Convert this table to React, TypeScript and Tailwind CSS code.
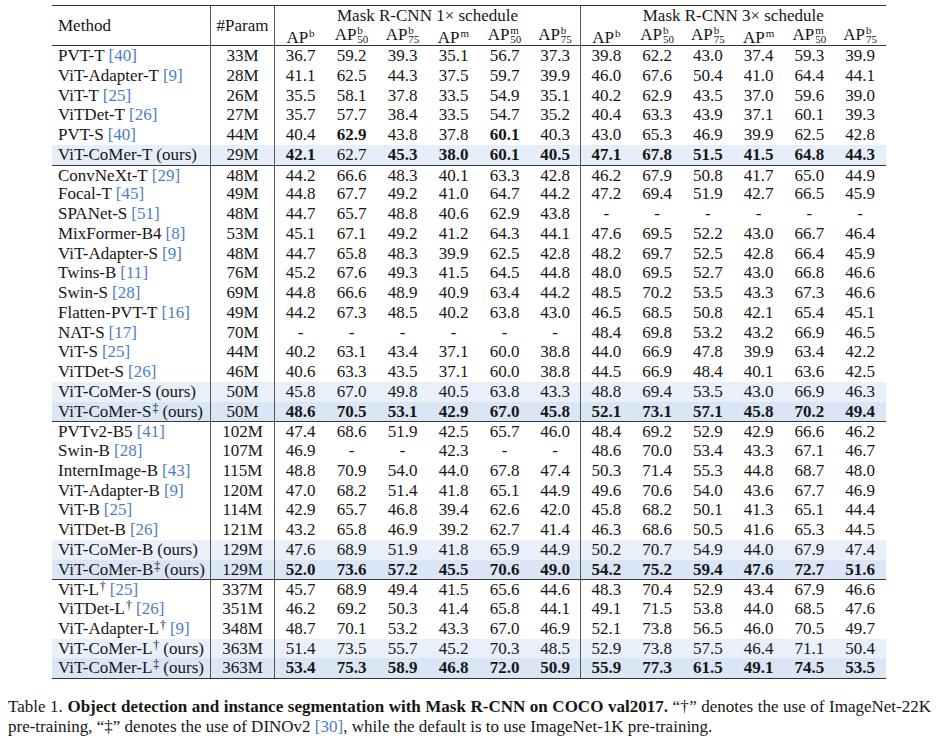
import React from "react";

type Cell = { v: string; b?: boolean };
type Row = {
  name: string;
  sup?: string;
  cite?: string;
  ours?: boolean;
  param: string;
  vals: string;
  bold?: string;
  bg?: "light" | "dark" | "tlight";
};

const GRID = "grid grid-cols-[159px_64px_repeat(6,51px)_repeat(6,50.75px)]";

const groups: Row[][] = [
  [
    { name: "PVT-T", cite: "40", param: "33M", vals: "36.7 59.2 39.3 35.1 56.7 37.3 39.8 62.2 43.0 37.4 59.3 39.9" },
    { name: "ViT-Adapter-T", cite: "9", param: "28M", vals: "41.1 62.5 44.3 37.5 59.7 39.9 46.0 67.6 50.4 41.0 64.4 44.1" },
    { name: "ViT-T", cite: "25", param: "26M", vals: "35.5 58.1 37.8 33.5 54.9 35.1 40.2 62.9 43.5 37.0 59.6 39.0" },
    { name: "ViTDet-T", cite: "26", param: "27M", vals: "35.7 57.7 38.4 33.5 54.7 35.2 40.4 63.3 43.9 37.1 60.1 39.3" },
    { name: "PVT-S", cite: "40", param: "44M", vals: "40.4 62.9 43.8 37.8 60.1 40.3 43.0 65.3 46.9 39.9 62.5 42.8", bold: "1,4" },
    { name: "ViT-CoMer-T", ours: true, param: "29M", vals: "42.1 62.7 45.3 38.0 60.1 40.5 47.1 67.8 51.5 41.5 64.8 44.3", bold: "0,2,3,4,5,6,7,8,9,10,11", bg: "tlight" },
  ],
  [
    { name: "ConvNeXt-T", cite: "29", param: "48M", vals: "44.2 66.6 48.3 40.1 63.3 42.8 46.2 67.9 50.8 41.7 65.0 44.9" },
    { name: "Focal-T", cite: "45", param: "49M", vals: "44.8 67.7 49.2 41.0 64.7 44.2 47.2 69.4 51.9 42.7 66.5 45.9" },
    { name: "SPANet-S", cite: "51", param: "48M", vals: "44.7 65.7 48.8 40.6 62.9 43.8 - - - - - -" },
    { name: "MixFormer-B4", cite: "8", param: "53M", vals: "45.1 67.1 49.2 41.2 64.3 44.1 47.6 69.5 52.2 43.0 66.7 46.4" },
    { name: "ViT-Adapter-S", cite: "9", param: "48M", vals: "44.7 65.8 48.3 39.9 62.5 42.8 48.2 69.7 52.5 42.8 66.4 45.9" },
    { name: "Twins-B", cite: "11", param: "76M", vals: "45.2 67.6 49.3 41.5 64.5 44.8 48.0 69.5 52.7 43.0 66.8 46.6" },
    { name: "Swin-S", cite: "28", param: "69M", vals: "44.8 66.6 48.9 40.9 63.4 44.2 48.5 70.2 53.5 43.3 67.3 46.6" },
    { name: "Flatten-PVT-T", cite: "16", param: "49M", vals: "44.2 67.3 48.5 40.2 63.8 43.0 46.5 68.5 50.8 42.1 65.4 45.1" },
    { name: "NAT-S", cite: "17", param: "70M", vals: "- - - - - - 48.4 69.8 53.2 43.2 66.9 46.5" },
    { name: "ViT-S", cite: "25", param: "44M", vals: "40.2 63.1 43.4 37.1 60.0 38.8 44.0 66.9 47.8 39.9 63.4 42.2" },
    { name: "ViTDet-S", cite: "26", param: "46M", vals: "40.6 63.3 43.5 37.1 60.0 38.8 44.5 66.9 48.4 40.1 63.6 42.5" },
    { name: "ViT-CoMer-S", ours: true, param: "50M", vals: "45.8 67.0 49.8 40.5 63.8 43.3 48.8 69.4 53.5 43.0 66.9 46.3", bg: "light" },
    { name: "ViT-CoMer-S", sup: "‡", ours: true, param: "50M", vals: "48.6 70.5 53.1 42.9 67.0 45.8 52.1 73.1 57.1 45.8 70.2 49.4", bold: "all", bg: "dark" },
  ],
  [
    { name: "PVTv2-B5", cite: "41", param: "102M", vals: "47.4 68.6 51.9 42.5 65.7 46.0 48.4 69.2 52.9 42.9 66.6 46.2" },
    { name: "Swin-B", cite: "28", param: "107M", vals: "46.9 - - 42.3 - - 48.6 70.0 53.4 43.3 67.1 46.7" },
    { name: "InternImage-B", cite: "43", param: "115M", vals: "48.8 70.9 54.0 44.0 67.8 47.4 50.3 71.4 55.3 44.8 68.7 48.0" },
    { name: "ViT-Adapter-B", cite: "9", param: "120M", vals: "47.0 68.2 51.4 41.8 65.1 44.9 49.6 70.6 54.0 43.6 67.7 46.9" },
    { name: "ViT-B", cite: "25", param: "114M", vals: "42.9 65.7 46.8 39.4 62.6 42.0 45.8 68.2 50.1 41.3 65.1 44.4" },
    { name: "ViTDet-B", cite: "26", param: "121M", vals: "43.2 65.8 46.9 39.2 62.7 41.4 46.3 68.6 50.5 41.6 65.3 44.5" },
    { name: "ViT-CoMer-B", ours: true, param: "129M", vals: "47.6 68.9 51.9 41.8 65.9 44.9 50.2 70.7 54.9 44.0 67.9 47.4", bg: "light" },
    { name: "ViT-CoMer-B", sup: "‡", ours: true, param: "129M", vals: "52.0 73.6 57.2 45.5 70.6 49.0 54.2 75.2 59.4 47.6 72.7 51.6", bold: "all", bg: "dark" },
  ],
  [
    { name: "ViT-L", sup: "†", cite: "25", param: "337M", vals: "45.7 68.9 49.4 41.5 65.6 44.6 48.3 70.4 52.9 43.4 67.9 46.6" },
    { name: "ViTDet-L", sup: "†", cite: "26", param: "351M", vals: "46.2 69.2 50.3 41.4 65.8 44.1 49.1 71.5 53.8 44.0 68.5 47.6" },
    { name: "ViT-Adapter-L", sup: "†", cite: "9", param: "348M", vals: "48.7 70.1 53.2 43.3 67.0 46.9 52.1 73.8 56.5 46.0 70.5 49.7" },
    { name: "ViT-CoMer-L", sup: "†", ours: true, param: "363M", vals: "51.4 73.5 55.7 45.2 70.3 48.5 52.9 73.8 57.5 46.4 71.1 50.4", bg: "light" },
    { name: "ViT-CoMer-L", sup: "‡", ours: true, param: "363M", vals: "53.4 75.3 58.9 46.8 72.0 50.9 55.9 77.3 61.5 49.1 74.5 53.5", bold: "all", bg: "dark" },
  ],
];

function cells(r: Row): Cell[] {
  const vs = r.vals.split(" ");
  let set: number[] = [];
  if (r.bold === "all") set = vs.map((_, i) => i);
  else if (r.bold) set = r.bold.split(",").map((x) => parseInt(x, 10));
  return vs.map((v, i) => ({ v, b: set.includes(i) }));
}

function Ap({ sup, sub }: { sup: string; sub?: string }) {
  if (!sub) {
    return (
      <span>
        AP<span className="text-[11px] align-[6px] ml-[1px]">{sup}</span>
      </span>
    );
  }
  return (
    <span className="inline-flex items-end">
      AP
      <span className="inline-flex flex-col text-[11px] leading-[9px] ml-[1px] mb-[1px]">
        <span>{sup}</span>
        <span>{sub}</span>
      </span>
    </span>
  );
}

const heads: { sup: string; sub?: string }[] = [
  { sup: "b" },
  { sup: "b", sub: "50" },
  { sup: "b", sub: "75" },
  { sup: "m" },
  { sup: "m", sub: "50" },
  { sup: "b", sub: "75" },
];

const bgMap: Record<string, string> = {
  light: "bg-[#e9f0fa]",
  dark: "bg-[#dae5f5]",
  tlight: "bg-[#e6eef9]",
};

function BodyRow({ r, first }: { r: Row; first: boolean }) {
  const cs = cells(r);
  return (
    <div
      className={`${GRID} h-[19.75px] ${first ? "border-t border-[#3a3a3a]" : ""} ${r.bg ? bgMap[r.bg] : ""}`}
    >
      <div className="flex items-center pl-[6px] border-r border-[#555] whitespace-nowrap">
        <span>{r.name}</span>
        {r.sup && <span className="text-[12px] self-start leading-[12px] ml-[1px]">{r.sup}</span>}
        {r.ours && <span className="ml-[4px]">(ours)</span>}
        {r.cite && <span className="ml-[4px] text-[#4a80c4]">[{r.cite}]</span>}
      </div>
      <div className="flex items-center justify-center border-r border-[#555]">{r.param}</div>
      {cs.map((c, i) => (
        <div
          key={i}
          className={`flex items-center justify-center ${i === 5 ? "border-r border-[#555]" : ""} ${c.b ? "font-bold" : ""}`}
        >
          {c.v}
        </div>
      ))}
    </div>
  );
}

export default function App() {
  return (
    <div
      className="w-[941px] h-[747px] bg-white text-[#161616] text-[17px] leading-[20px] overflow-hidden"
      style={{ fontFamily: '"Liberation Serif", "Times New Roman", serif' }}
    >
      <div className="pt-[5px] pl-[52px]">
        <div className="w-[833.5px] border-t border-b border-[#333]">
          <div className={`${GRID} grid-rows-[19.5px_19.5px] border-b border-[#333]`}>
            <div className="row-span-2 flex items-center pl-[6px] border-r border-[#555]">Method</div>
            <div className="row-span-2 flex items-center justify-center border-r border-[#555]">#Param</div>
            <div className="col-span-6 flex items-center justify-center border-r border-[#555] pt-[1px]">
              Mask R-CNN 1× schedule
            </div>
            <div className="col-span-6 flex items-center justify-center pt-[1px]">Mask R-CNN 3× schedule</div>
            {heads.map((h, i) => (
              <div key={"a" + i} className={`flex items-center justify-center ${i === 5 ? "border-r border-[#555]" : ""}`}>
                <Ap sup={h.sup} sub={h.sub} />
              </div>
            ))}
            {heads.map((h, i) => (
              <div key={"b" + i} className="flex items-center justify-center">
                <Ap sup={h.sup} sub={h.sub} />
              </div>
            ))}
          </div>
          {groups.map((g, gi) =>
            g.map((r, ri) => <BodyRow key={gi + "-" + ri} r={r} first={ri === 0 && gi > 0} />)
          )}
        </div>
      </div>
      <p className="ml-[8px] w-[923px] mt-[18px] text-justify">
        Table 1. <b>Object detection and instance segmentation with Mask R-CNN on COCO val2017.</b> “†” denotes the use
        of ImageNet-22K <span className="whitespace-nowrap">pre-training,</span> “‡” denotes the use of DINOv2{" "}
        <span className="text-[#4a80c4]">[30]</span>, while the default is to use ImageNet-1K pre-training.
      </p>
    </div>
  );
}
